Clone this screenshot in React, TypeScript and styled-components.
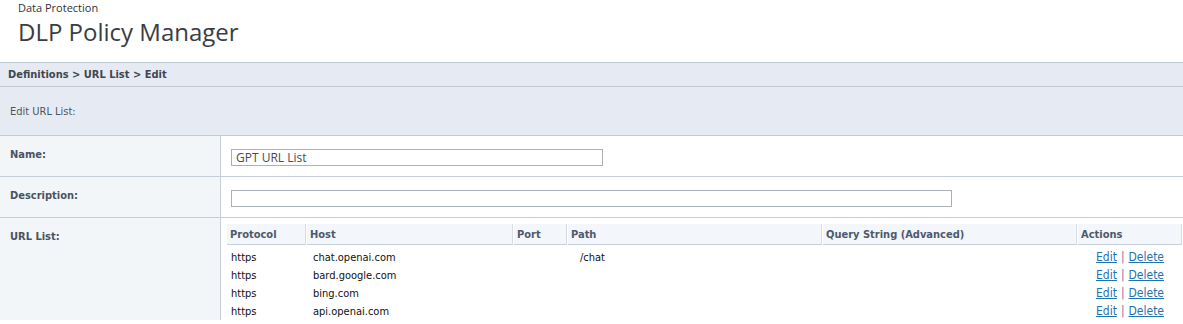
import React from "react";
import styled, { createGlobalStyle } from "styled-components";

const GlobalStyle = createGlobalStyle`
  html, body { margin: 0; padding: 0; background: #ffffff; }
  body { font-family: "DejaVu Sans Condensed", "DejaVu Sans", sans-serif; font-stretch: condensed; }
  * { box-sizing: border-box; }
`;

const Page = styled.div`
  width: 1183px;
  overflow: hidden;
`;

const Header = styled.header`
  height: 62px;
  padding: 1px 18px 0;
  font-family: "Open Sans", sans-serif;
  font-stretch: normal;
`;

const Kicker = styled.div`
  font-size: 11px;
  line-height: 14px;
  color: #333333;
`;

const Title = styled.h1`
  margin: 1px 0 0;
  font-size: 24px;
  line-height: 32px;
  font-weight: 400;
  color: #3a3d42;
`;

const Breadcrumb = styled.div`
  height: 25px;
  display: flex;
  align-items: center;
  padding: 0 8px;
  background: #e6ebf3;
  border-top: 1px solid #bfcad5;
  border-bottom: 1px solid #bfcad5;
  font-size: 11px;
  font-weight: 700;
  color: #3f4652;
`;

const SectionTitle = styled.div`
  height: 49px;
  display: flex;
  align-items: center;
  padding: 0 10px;
  background: #e6ebf3;
  border-bottom: 1px solid #bfcad5;
  font-size: 11px;
  color: #4e5560;
`;

const FormRow = styled.div`
  display: grid;
  grid-template-columns: 221px 1fr;
  border-bottom: 1px solid #c6cfd9;
  &:last-child { border-bottom: none; }
`;

const Label = styled.div`
  background: #f3f6f9;
  border-right: 1px solid #c6cfd9;
  padding: 12px 10px;
  font-size: 11px;
  line-height: 14px;
  font-weight: 700;
  color: #4a5260;
`;

const Value = styled.div<{ $table?: boolean }>`
  background: #ffffff;
  padding: ${(p) => (p.$table ? "6px 0 0 5px" : "13px 10px 10px")};
`;

const TextInput = styled.input<{ $width: number }>`
  display: block;
  width: ${(p) => p.$width}px;
  height: 17px;
  margin: 0;
  padding: 0 4px;
  border: 1px solid #aab1b8;
  border-radius: 0;
  background: #ffffff;
  font-family: "Open Sans", sans-serif;
  font-stretch: normal;
  font-size: 12px;
  color: #474b52;
  outline: none;
`;

const Table = styled.table`
  width: 100%;
  table-layout: fixed;
  border-collapse: separate;
  border-spacing: 1px 0;
  font-size: 11px;
`;

const Th = styled.th<{ $width?: number }>`
  ${(p) => (p.$width ? `width: ${p.$width}px;` : "")}
  height: 21px;
  padding: 0 0 0 3px;
  text-align: left;
  vertical-align: middle;
  background: #f3f6fa;
  border-right: 1px solid #d6dde6;
  border-bottom: 1px solid #c6d0dc;
  font-weight: 700;
  color: #4d5a6d;
  white-space: nowrap;
  overflow: hidden;
`;

const Tr = styled.tr`
  &:first-child td { padding-top: 3px; height: 21px; }
`;

const Td = styled.td<{ $indent?: number; $center?: boolean }>`
  height: 18px;
  padding: 0 0 0 ${(p) => p.$indent ?? 4}px;
  text-align: ${(p) => (p.$center ? "center" : "left")};
  vertical-align: middle;
  color: #111111;
  white-space: nowrap;
`;

const Actions = styled.span`
  font-size: 12px;
  line-height: 18px;
`;

const ActionLink = styled.a`
  color: #1f72b0;
  text-decoration: underline;
  cursor: pointer;
`;

const Pipe = styled.span`
  color: #8a6ea3;
  margin: 0 4px;
`;

const rows = [
  { protocol: "https", host: "chat.openai.com", port: "", path: "/chat", query: "" },
  { protocol: "https", host: "bard.google.com", port: "", path: "", query: "" },
  { protocol: "https", host: "bing.com", port: "", path: "", query: "" },
  { protocol: "https", host: "api.openai.com", port: "", path: "", query: "" },
];

export default function App() {
  return (
    <Page>
      <GlobalStyle />
      <Header>
        <Kicker>Data Protection</Kicker>
        <Title>DLP Policy Manager</Title>
      </Header>
      <Breadcrumb>Definitions &gt; URL List &gt; Edit</Breadcrumb>
      <SectionTitle>Edit URL List:</SectionTitle>
      <FormRow>
        <Label>Name:</Label>
        <Value>
          <TextInput $width={372} defaultValue="GPT URL List" />
        </Value>
      </FormRow>
      <FormRow>
        <Label>Description:</Label>
        <Value>
          <TextInput $width={721} defaultValue="" />
        </Value>
      </FormRow>
      <FormRow>
        <Label>URL List:</Label>
        <Value $table>
          <Table>
            <thead>
              <tr>
                <Th $width={79}>Protocol</Th>
                <Th $width={206}>Host</Th>
                <Th $width={53}>Port</Th>
                <Th $width={254}>Path</Th>
                <Th $width={254}>Query String (Advanced)</Th>
                <Th>Actions</Th>
              </tr>
            </thead>
            <tbody>
              {rows.map((r) => (
                <Tr key={r.host}>
                  <Td>{r.protocol}</Td>
                  <Td $indent={6}>{r.host}</Td>
                  <Td>{r.port}</Td>
                  <Td $indent={12}>{r.path}</Td>
                  <Td>{r.query}</Td>
                  <Td $center $indent={0}>
                    <Actions>
                      <ActionLink>Edit</ActionLink>
                      <Pipe>|</Pipe>
                      <ActionLink>Delete</ActionLink>
                    </Actions>
                  </Td>
                </Tr>
              ))}
            </tbody>
          </Table>
        </Value>
      </FormRow>
    </Page>
  );
}
